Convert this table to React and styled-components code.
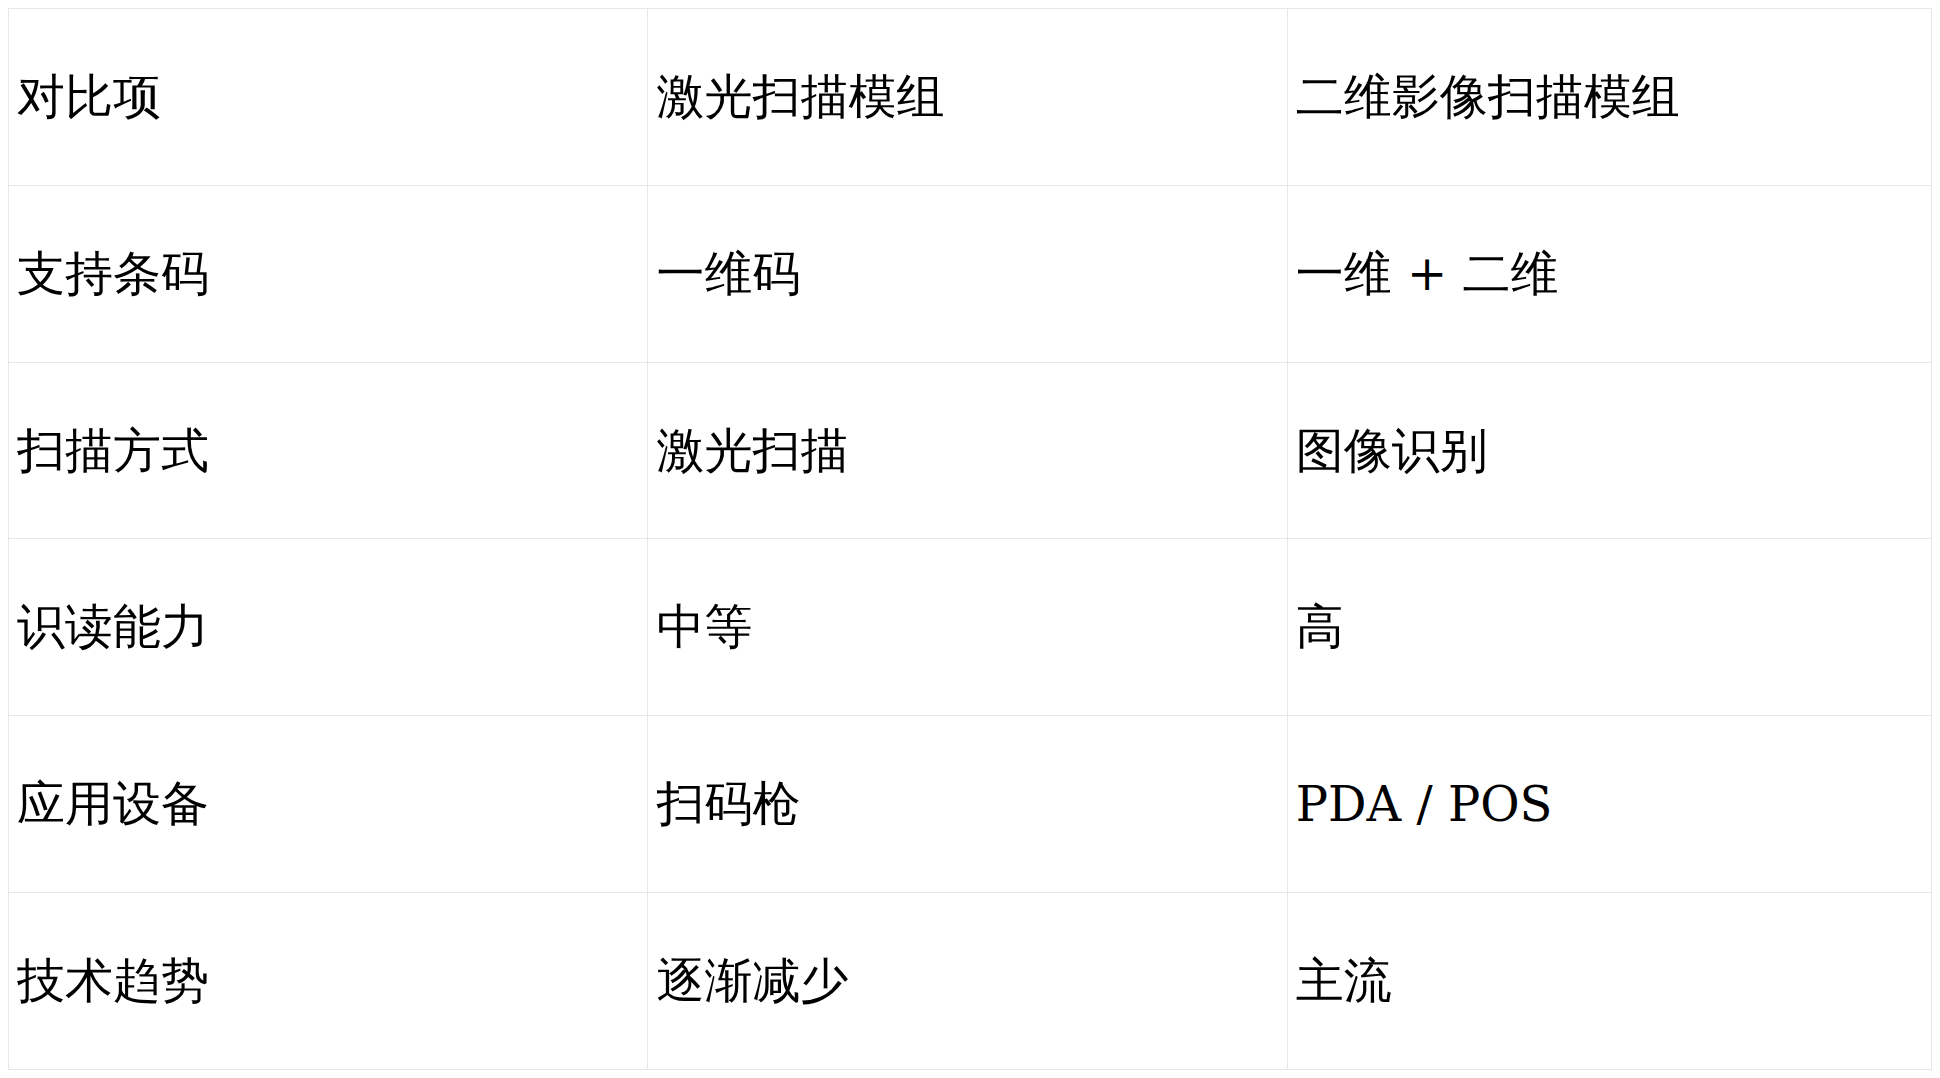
import React from 'react';
import styled, { createGlobalStyle } from 'styled-components';

const rows = [
	['对比项', '激光扫描模组', '二维影像扫描模组'],
	['支持条码', '一维码', '一维 + 二维'],
	['扫描方式', '激光扫描', '图像识别'],
	['识读能力', '中等', '高'],
	['应用设备', '扫码枪', 'PDA / POS'],
	['技术趋势', '逐渐减少', '主流'],
];

function App() {
	return (
		<>
			<GlobalStyle />
			<Table>
				<colgroup>
					<Col $width="33.25%" />
					<Col $width="33.25%" />
					<Col />
				</colgroup>
				<tbody>
					{rows.map((row) => (
						<Row key={row[0]}>
							{row.map((cell, i) => (
								<Cell key={i}>{cell}</Cell>
							))}
						</Row>
					))}
				</tbody>
			</Table>
		</>
	);
}

export default App;

const GlobalStyle = createGlobalStyle`
	body {
		margin: 8px;
		background: #fff;
		font-family: "DejaVu Serif", "Droid Sans Fallback", "WenQuanYi Zen Hei", "Noto Sans CJK SC", serif;
	}
`;

const Table = styled.table`
	width: 100%;
	height: calc(100vh - 16px);
	border-collapse: collapse;
	table-layout: fixed;
	border: 1px solid #e5e7eb;
`;

const Col = styled.col`
	width: ${(p) => p.$width || 'auto'};
`;

const Row = styled.tr`
	height: calc(100% / 6);
`;

const Cell = styled.td`
	border: 1px solid #e5e7eb;
	padding: 8px;
	font-size: 48px;
	color: #000;
	vertical-align: middle;
	text-align: left;
`;
